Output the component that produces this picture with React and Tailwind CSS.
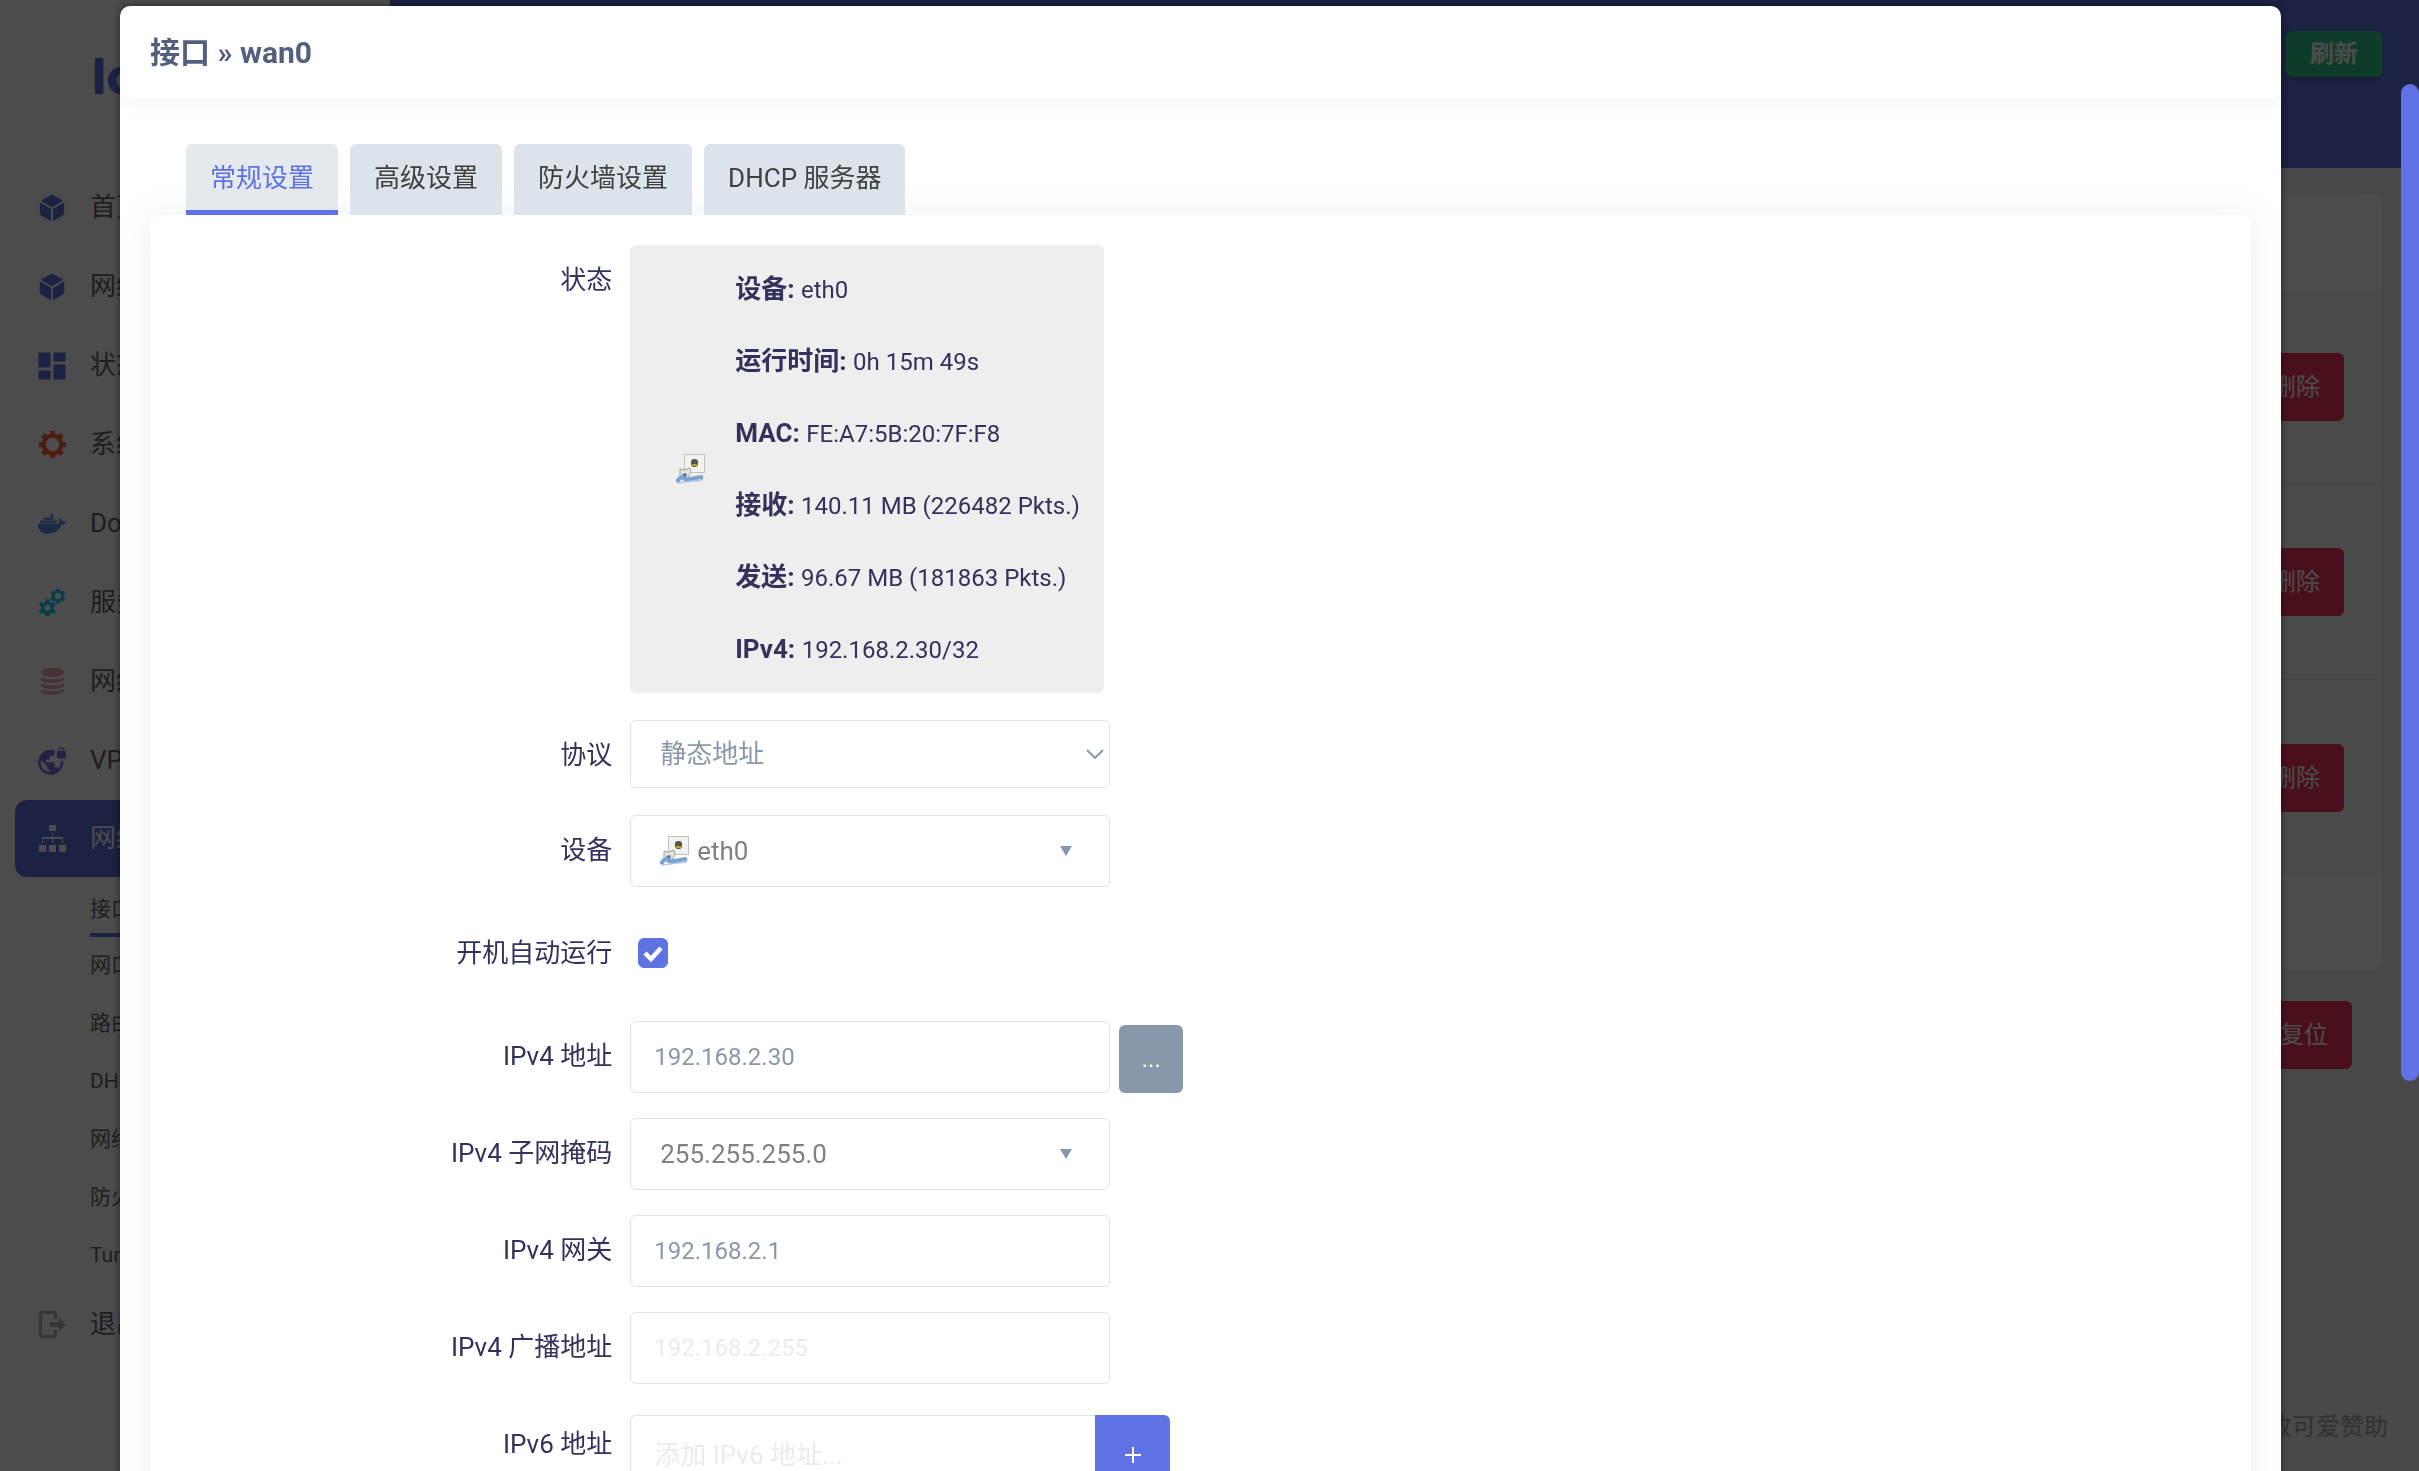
import React, { useState } from "react";
import { IoCube } from "react-icons/io5";
import { MdDashboard, MdVpnLock } from "react-icons/md";
import { FaDocker } from "react-icons/fa";

const TEETH8 = [0, 45, 90, 135, 180, 225, 270, 315];
const TEETH6 = [0, 60, 120, 180, 240, 300];

const Gear = ({ cx, cy, r, stroke, tooth, angles }) => (
  <g transform={`translate(${cx} ${cy})`}>
    <circle r={r} fill="none" stroke="currentColor" strokeWidth={stroke} />
    {angles.map((a) => (
      <rect
        key={a}
        x={-tooth / 2}
        y={-(r + stroke / 2 + tooth * 0.55)}
        width={tooth}
        height={tooth}
        fill="currentColor"
        transform={`rotate(${a})`}
      />
    ))}
  </g>
);

const SystemIcon = () => (
  <svg width="27" height="27" viewBox="0 0 27 27">
    <Gear cx={13.5} cy={13.5} r={8.8} stroke={4.2} tooth={5} angles={TEETH8} />
  </svg>
);

const ServicesIcon = () => (
  <svg width="27" height="27" viewBox="0 0 27 27">
    <Gear cx={8.5} cy={18.8} r={4.8} stroke={3.4} tooth={3.8} angles={TEETH6} />
    <Gear cx={18.8} cy={7} r={4.6} stroke={2.8} tooth={3.2} angles={TEETH6} />
  </svg>
);

const StorageIcon = () => (
  <svg width="27" height="27" viewBox="0 0 27 27" fill="currentColor">
    <ellipse cx="13.5" cy="4.5" rx="11.5" ry="4.5" />
    <path d="M2 9c2 3 21 3 23 0v3c-2 4-21 4-23 0z" />
    <path d="M2 15c2 3 21 3 23 0v3c-2 4-21 4-23 0z" />
    <path d="M2 21c2 3 21 3 23 0v2c-2 5-21 5-23 0z" />
  </svg>
);

const NetworkIcon = () => (
  <svg width="27" height="27" viewBox="0 0 27 27" fill="currentColor">
    <path d="M10 0h7v6h-7zM0 20h7v7H0zM10 20h7v7h-7zM20 20h7v7h-7z" />
    <path d="M13 8h1v4h10v6h-1v-4H14v4h-1v-4H4v4H3v-6h10z" />
  </svg>
);

const LogoutIcon = () => (
  <svg width="27" height="27" viewBox="0 0 27 27" fill="currentColor">
    <path d="M2 0h14l2 2v6h-3V3H3v21h12v-5h3v6l-2 2H2l-2-2V2z" />
    <path d="M11 11h9V6l7 7.5-7 7.5V16h-9z" />
  </svg>
);

const EthIcon = () => (
  <svg width="29" height="30" viewBox="0 0 29 30" aria-hidden="true">
    <rect x="8.5" y="0.5" width="20" height="18" fill="#f2f2ee" stroke="#c2c2bd" />
    <rect x="15" y="5" width="7" height="8" rx="3" fill="#56564b" />
    <rect x="16" y="10" width="5" height="2" fill="#b8a52c" />
    <path d="M4 15l4 1 6-2 1 4-3 6-4 2-4-4z" fill="#e2e2de" stroke="#a3a39e" />
    <path d="M6 20l4-1 1 3-3 3z" fill="#5c7c9c" />
    <path d="M1 28c3-6 6-5 8-3 5 1 8-1 18-2" fill="none" stroke="#7ba1d0" strokeWidth="4" />
    <path d="M1 29c5 0 9-1 16-2s8 0 10-2" fill="none" stroke="#a9c5e6" strokeWidth="1.5" />
  </svg>
);

const Triangle = () => (
  <svg width="12" height="10" viewBox="0 0 12 10" className="pointer-events-none absolute right-[38px] top-1/2 -translate-y-1/2">
    <path d="M0 0h12L6 10z" fill="#8898aa" />
  </svg>
);

const menu = [
  { name: "首页", icon: <IoCube size={30} />, color: "text-[#5e72e4]" },
  { name: "网络向导", icon: <IoCube size={30} />, color: "text-[#5e72e4]" },
  { name: "状态", icon: <MdDashboard size={36} />, color: "text-[#5e72e4]" },
  { name: "系统", icon: <SystemIcon />, color: "text-[#fb6340]" },
  { name: "Docker", icon: <FaDocker size={28} />, color: "text-[#5a8dee]" },
  { name: "服务", icon: <ServicesIcon />, color: "text-[#11cdef]" },
  { name: "网络存储", icon: <StorageIcon />, color: "text-[#f3a4b5]" },
  { name: "VPN", icon: <MdVpnLock size={30} />, color: "text-[#8965e0]" },
];

const subMenu = ["网口配置", "路由", "DHCP/DNS", "网络诊断", "防火墙", "Turbo ACC"];

const tabs = ["常规设置", "高级设置", "防火墙设置", "DHCP 服务器"];

const status = [
  ["设备:", "eth0"],
  ["运行时间:", "0h 15m 49s"],
  ["MAC:", "FE:A7:5B:20:7F:F8"],
  ["接收:", "140.11 MB (226482 Pkts.)"],
  ["发送:", "96.67 MB (181863 Pkts.)"],
  ["IPv4:", "192.168.2.30/32"],
];

const MenuItem = ({ name, icon, color }) => (
  <a href="#" className="flex h-[79px] items-center pl-[34px]">
    <span className={`flex w-9 items-center justify-center ${color}`}>{icon}</span>
    <span className="pl-5 text-[26px] text-[#666]">{name}</span>
  </a>
);

const Sidebar = () => (
  <aside className="w-[390px] shrink-0 bg-white">
    <div className="h-[168px] pl-[92px] pt-11 font-[Inter] text-[50px] font-extrabold leading-[64px] text-[#5e72e4]">lo</div>
    <nav className="flex flex-col">
      {menu.map((m) => (
        <MenuItem key={m.name} {...m} />
      ))}
      <a href="#" className="mx-[15px] flex h-[77px] items-center rounded-xl bg-[#5e72e4] pl-[19px] text-white">
        <span className="flex w-9 items-center justify-center">
          <NetworkIcon />
        </span>
        <span className="pl-5 text-[26px]">网络</span>
      </a>
      <div className="flex flex-col pl-[90px] text-[21px] text-[#666]">
        <a href="#" className="w-[120px] border-b-4 border-[#5e72e4] pb-2 pt-4 leading-8">接口</a>
        {subMenu.map((s) => (
          <a key={s} href="#" className="flex h-[58px] items-center">{s}</a>
        ))}
      </div>
      <MenuItem name="退出" icon={<LogoutIcon />} color="text-[#adb5bd]" />
    </nav>
  </aside>
);

const Background = () => (
  <div className="flex h-screen overflow-hidden">
    <Sidebar />
    <div className="flex flex-1 flex-col bg-[#f4f5f5]">
      <header className="flex h-[168px] items-start justify-end bg-[#5e72e4] pr-[37px] pt-[31px]">
        <button className="h-[46px] rounded-md bg-[#2dce89] px-6 text-[24px] font-bold leading-[46px] text-white shadow-md">刷新</button>
      </header>
      <main className="flex flex-1 flex-col pl-9 pr-[37px] pt-[26px]">
        <section className="rounded-xl shadow-[0_0_32px_rgba(136,152,170,0.15)]">
          <div className="h-24 rounded-t-xl bg-white"></div>
          <div className="divide-y divide-[#dee2e6] bg-[#f6f7f7]">
            {[1, 2, 3].map((i) => (
              <div key={i} className="flex h-[195px] items-center justify-end pr-[38px]">
                <button className="h-[68px] rounded-md bg-[#f5365c] px-6 text-[24px] text-white">删除</button>
              </div>
            ))}
          </div>
          <div className="h-24 rounded-b-xl bg-white"></div>
        </section>
        <div className="flex justify-end pr-[30px] pt-[30px]">
          <button className="h-[68px] rounded-md bg-[#f5365c] px-6 text-[24px] text-white">复位</button>
        </div>
        <footer className="-mr-1.5 mt-auto pb-[26px] text-right text-[24px] leading-9 text-[#a5a8ab]">收可爱赞助</footer>
      </main>
    </div>
  </div>
);

const Row = ({ label, id, className = "", children }) => (
  <div className={`flex items-start gap-[18px] ${className}`}>
    <label htmlFor={id} className="w-[22%] text-right leading-[70px]">{label}</label>
    {children}
  </div>
);

const App = () => {
  const [tab, setTab] = useState("常规设置");
  const [auto, setAuto] = useState(true);

  return (
    <div className="font-[Roboto,'Noto_Sans_CJK_SC',sans-serif]">
      <Background />
      <div className="fixed inset-0 overflow-hidden bg-black/70 pr-[18px] pt-1.5">
        <div className="mx-auto min-h-screen w-[90%] rounded-[10px] bg-white shadow-[0_0_8px_rgba(0,0,0,0.5)]">
          <h4 className="rounded-[10px] pb-6 pl-[30px] pt-6 text-[30px] font-bold leading-[45px] text-[#525f7f] shadow-[0_8px_16px_rgba(0,0,0,0.03)]">接口 » wan0</h4>
          <div className="px-[30px] pt-[45px] text-[26px] text-[#32325d]">
            <div role="tablist" className="relative z-10 flex gap-3 pl-9">
              {tabs.map((t) => (
                <button
                  key={t}
                  role="tab"
                  aria-selected={t === tab}
                  onClick={() => setTab(t)}
                  className={`h-[71px] rounded-t-md border-b-[5px] px-6 pt-0.5 leading-[64px] ${
                    t === tab ? "border-[#5e72e4] bg-[#e4e9ed] text-[#5e72e4]" : "border-[#dce3ea] bg-[#dce3ea] text-[#404040]"
                  }`}
                >
                  {t}
                </button>
              ))}
            </div>
            <form className="flex flex-col gap-[25px] rounded-[10px] bg-white pb-20 pt-[30px] shadow-[0_0_32px_rgba(136,152,170,0.15)]">
              <div className="flex items-start gap-[18px] pb-0.5">
                <span className="w-[22%] text-right leading-[70px]">状态</span>
                <div className="flex items-center rounded-md bg-[#eee] py-2 pl-[46px] pr-6">
                  <EthIcon />
                  <div className="pl-[30px]">
                    {status.map(([k, v]) => (
                      <p key={k} className="h-[72px] leading-[72px]">
                        <strong className="font-bold">{k}</strong> <span className="text-[24px]">{v}</span>
                      </p>
                    ))}
                  </div>
                </div>
              </div>
              <Row label="协议" id="proto">
                <div className="relative w-[480px]">
                  <select id="proto" className="h-[68px] w-full appearance-none rounded-md border border-[#dee2e6] bg-white pl-[29px] text-[#8898aa]">
                    <option>静态地址</option>
                    <option>DHCP 客户端</option>
                    <option>PPPoE</option>
                  </select>
                  <svg width="18" height="10" viewBox="0 0 18 10" className="pointer-events-none absolute right-1.5 top-1/2 -translate-y-1/2">
                    <path d="M1 1l8 8 8-8" fill="none" stroke="#8898aa" strokeWidth="2" />
                  </svg>
                </div>
              </Row>
              <Row label="设备" id="device">
                <div className="relative w-[480px]">
                  <button id="device" type="button" className="flex h-[72px] w-full items-center gap-2 rounded-md border border-[#dee2e6] bg-white pl-[29px] text-[#808080]">
                    <EthIcon />
                    eth0
                  </button>
                  <Triangle />
                </div>
              </Row>
              <Row label="开机自动运行" id="auto" className="h-[84px] pt-1.5">
                <span className="relative mt-5 ml-2 block size-[30px]">
                  <input
                    id="auto"
                    type="checkbox"
                    checked={auto}
                    onChange={(e) => setAuto(e.target.checked)}
                    className="block size-[30px] appearance-none rounded-md border border-[#5e72e4] checked:bg-[#5e72e4]"
                  />
                  <svg width="20" height="18" viewBox="0 0 20 18" className="pointer-events-none absolute left-[5px] top-[7px]">
                    <path d="M2 8l6 6L18 3" fill="none" stroke="#fff" strokeWidth="4.5" />
                  </svg>
                </span>
              </Row>
              <Row label="IPv4 地址" id="ipaddr">
                <input id="ipaddr" defaultValue="192.168.2.30" className="h-[72px] w-[480px] rounded-md border border-[#dee2e6] pl-[23px] text-[24px] text-[#8898aa]" />
                <button type="button" className="-ml-[9px] h-[68px] w-16 self-end rounded-md bg-[#8898aa] text-[24px] text-white">...</button>
              </Row>
              <Row label="IPv4 子网掩码" id="netmask">
                <div className="relative w-[480px]">
                  <select id="netmask" className="h-[72px] w-full appearance-none rounded-md border border-[#dee2e6] bg-white pl-[29px] text-[#808080]">
                    <option>255.255.255.0</option>
                    <option>255.255.0.0</option>
                    <option>255.0.0.0</option>
                  </select>
                  <Triangle />
                </div>
              </Row>
              <Row label="IPv4 网关" id="gateway">
                <input id="gateway" defaultValue="192.168.2.1" className="h-[72px] w-[480px] rounded-md border border-[#dee2e6] pl-[23px] text-[24px] text-[#8898aa]" />
              </Row>
              <Row label="IPv4 广播地址" id="broadcast">
                <input id="broadcast" placeholder="192.168.2.255" className="h-[72px] w-[480px] rounded-md border border-[#dee2e6] pl-[23px] text-[24px] placeholder:text-[#e9ecef]" />
              </Row>
              <Row label="IPv6 地址" id="ip6addr">
                <div className="flex pt-1.5">
                  <input id="ip6addr" placeholder="添加 IPv6 地址..." className="h-20 w-[465px] rounded-l-md border border-r-0 border-[#dee2e6] pl-[23px] placeholder:text-[#e9ecef]" />
                  <button type="button" aria-label="添加" className="flex h-20 w-[75px] items-center justify-center rounded-r-md bg-[#5e72e4]">
                    <svg width="16" height="16" viewBox="0 0 16 16">
                      <path d="M8 0v16M0 8h16" stroke="#fff" strokeWidth="2" />
                    </svg>
                  </button>
                </div>
              </Row>
            </form>
          </div>
        </div>
        <div className="absolute right-0 top-[84px] h-[67.8%] w-[18px] rounded-full bg-[#5e72e4]"></div>
      </div>
    </div>
  );
};

export default App;
